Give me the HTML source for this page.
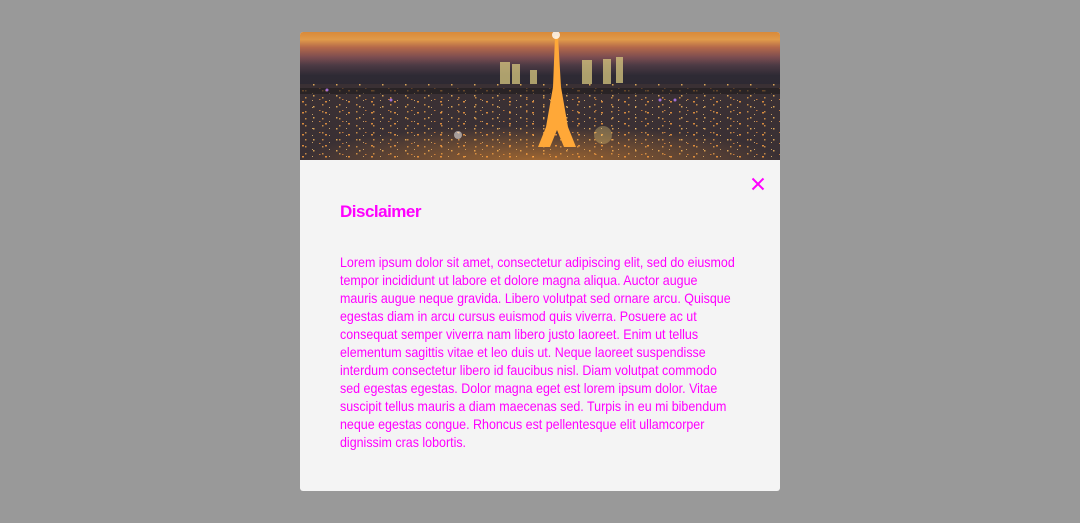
<!DOCTYPE html>
<html><head><meta charset="utf-8"><style>
html,body{margin:0;padding:0;width:1080px;height:523px;background:#999;overflow:hidden;font-family:"Liberation Sans",sans-serif}
.modal{position:absolute;left:300px;top:32px;width:480px;height:459px;background:#f4f4f4;border-radius:3px;overflow:hidden}
.img{position:absolute;left:0;top:0;width:480px;height:128px;overflow:hidden;
background:linear-gradient(180deg,#d88a3a 0%,#e09a4a 6%,#b4684a 12%,#7a4c50 20%,#4c3a44 26%,#2e2a34 34%,#262026 100%)}
.x{position:absolute;left:451px;top:145px;width:14px;height:14px}
h1{position:absolute;left:40px;top:170px;margin:0;font-size:17px;font-weight:bold;color:#f0f;letter-spacing:-0.5px}
.p{position:absolute;left:40px;top:221px;color:#f0f;font-size:14px;line-height:18px}
.p span{display:block;white-space:nowrap;transform:scaleX(.89);transform-origin:left}
</style></head><body>
<div class="modal">
<div class="img">
<svg width="480" height="128" style="position:absolute;left:0;top:0">
<defs>
<pattern id="l1" width="23" height="11" patternUnits="userSpaceOnUse">
<rect x="2" y="3" width="2" height="1.5" fill="#ffa040"/><rect x="13" y="8" width="1.5" height="1.5" fill="#ffc060"/><rect x="19" y="1" width="1.5" height="1" fill="#e08a40"/>
</pattern>
<pattern id="l2" width="17" height="7" patternUnits="userSpaceOnUse">
<rect x="5" y="2" width="1.5" height="1.5" fill="#ffb050"/><rect x="12" y="5" width="1" height="1" fill="#ffd080"/>
</pattern>
<radialGradient id="g" cx="50%" cy="100%" r="50%"><stop offset="0" stop-color="#ff9a30" stop-opacity=".5"/><stop offset="1" stop-color="#ff9a30" stop-opacity="0"/></radialGradient>
</defs>
<rect x="0" y="52" width="480" height="76" fill="#3a3034"/>
<rect x="0" y="52" width="480" height="76" fill="url(#l1)" opacity=".8"/>
<rect x="0" y="58" width="480" height="70" fill="url(#l2)" opacity=".7"/>
<rect x="0" y="60" width="480" height="68" fill="url(#g)"/>
<rect x="0" y="56" width="480" height="6" fill="#1e1a1c" opacity=".6"/>
<g fill="#d8c880" opacity=".75">
<rect x="200" y="30" width="10" height="22"/><rect x="212" y="32" width="8" height="20"/><rect x="230" y="38" width="7" height="14"/>
<rect x="282" y="28" width="10" height="24"/><rect x="303" y="27" width="8" height="25"/><rect x="316" y="25" width="7" height="26"/>
</g>
<polygon points="255,4 258,4 261,55 268,95 276,115 264,115 257,98 250,115 238,115 246,95 253,55" fill="#ffa838"/>
<circle cx="256" cy="3" r="4" fill="#fff" opacity=".8"/>
<g fill="#c080ff" opacity=".8"><circle cx="27" cy="58" r="1.5"/><circle cx="91" cy="68" r="1.5"/><circle cx="360" cy="68" r="1.5"/><circle cx="375" cy="68" r="1.5"/></g>
<circle cx="303" cy="103" r="9" fill="#ffe080" opacity=".3"/>
<circle cx="158" cy="103" r="4" fill="#fff" opacity=".5"/>
</svg>
</div>
<svg class="x" viewBox="0 0 14 14"><path d="M1.5 1.5L12.5 12.5M12.5 1.5L1.5 12.5" stroke="#f0f" stroke-width="2"/></svg>
<h1>Disclaimer</h1>
<div class="p">
<span>Lorem ipsum dolor sit amet, consectetur adipiscing elit, sed do eiusmod</span>
<span>tempor incididunt ut labore et dolore magna aliqua. Auctor augue</span>
<span>mauris augue neque gravida. Libero volutpat sed ornare arcu. Quisque</span>
<span>egestas diam in arcu cursus euismod quis viverra. Posuere ac ut</span>
<span>consequat semper viverra nam libero justo laoreet. Enim ut tellus</span>
<span>elementum sagittis vitae et leo duis ut. Neque laoreet suspendisse</span>
<span>interdum consectetur libero id faucibus nisl. Diam volutpat commodo</span>
<span>sed egestas egestas. Dolor magna eget est lorem ipsum dolor. Vitae</span>
<span>suscipit tellus mauris a diam maecenas sed. Turpis in eu mi bibendum</span>
<span>neque egestas congue. Rhoncus est pellentesque elit ullamcorper</span>
<span>dignissim cras lobortis.</span>
</div>
</div>
</body></html>
